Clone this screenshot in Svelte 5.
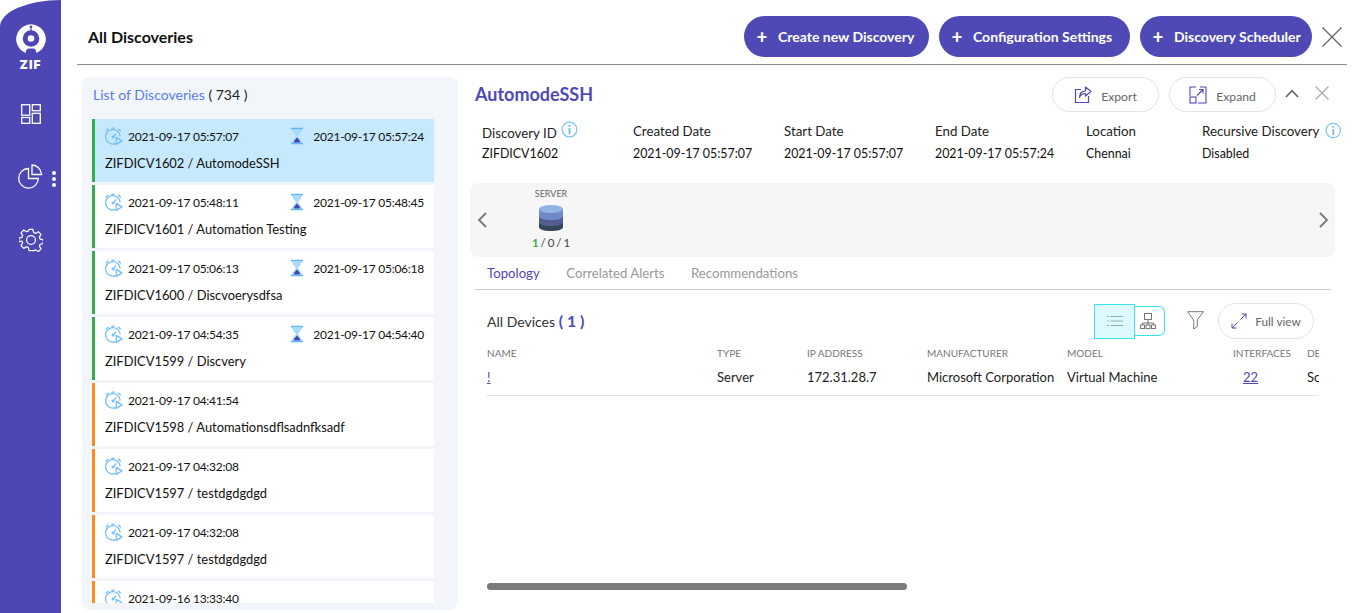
<script>
  const items = [
    { d: '2021-09-17 05:57:07', e: '2021-09-17 05:57:24', t: 'ZIFDICV1602 / AutomodeSSH', c: 'g', active: true },
    { d: '2021-09-17 05:48:11', e: '2021-09-17 05:48:45', t: 'ZIFDICV1601 / Automation Testing', c: 'g' },
    { d: '2021-09-17 05:06:13', e: '2021-09-17 05:06:18', t: 'ZIFDICV1600 / Discvoerysdfsa', c: 'g' },
    { d: '2021-09-17 04:54:35', e: '2021-09-17 04:54:40', t: 'ZIFDICV1599 / Discvery', c: 'g' },
    { d: '2021-09-17 04:41:54', t: 'ZIFDICV1598 / Automationsdflsadnfksadf', c: 'o' },
    { d: '2021-09-17 04:32:08', t: 'ZIFDICV1597 / testdgdgdgd', c: 'o' },
    { d: '2021-09-17 04:32:08', t: 'ZIFDICV1597 / testdgdgdgd', c: 'o' },
    { d: '2021-09-16 13:33:40', c: 'o' }
  ];
  const fields = [
    { l: 'Discovery ID', v: 'ZIFDICV1602', info: true, w: 151, low: true },
    { l: 'Created Date', v: '2021-09-17 05:57:07', w: 151 },
    { l: 'Start Date', v: '2021-09-17 05:57:07', w: 151 },
    { l: 'End Date', v: '2021-09-17 05:57:24', w: 151 },
    { l: 'Location', v: 'Chennai', w: 116 },
    { l: 'Recursive Discovery', v: 'Disabled', info: true, w: 140 }
  ];
</script>

{#snippet info()}
  <svg class="info" viewBox="0 0 18 18" width="17" height="17" aria-hidden="true">
    <circle cx="9" cy="9" r="7.8" fill="none" stroke="#7cc4f8" stroke-width="1.3" />
    <circle cx="9" cy="5.2" r="1.1" fill="#6dbcf6" />
    <rect x="8" y="7.5" width="2" height="6.5" fill="#6dbcf6" />
  </svg>
{/snippet}

{#snippet clock()}
  <svg viewBox="0 0 18 18" width="18" height="18" class="clock" aria-hidden="true">
    <g fill="none" stroke="#72bef7" stroke-width="1.25">
      <path d="M10.4 16.7A7.3 7.3 0 1 1 15.2 9.4" />
      <path d="M.8 4.4 3.4 1.8M13.2 1.8l2.6 2.600M6.400 1h3.200" />
      <path d="M8.400 9.800 11.200 6.400" />
      <circle cx="8" cy="10" r=".9" />
      <path d="M11.200 10.400v7l5.800-3.500z" stroke-linejoin="round" />
    </g>
  </svg>
{/snippet}

{#snippet hourglass()}
  <svg viewBox="0 0 14 18" width="14" height="18" aria-hidden="true">
    <path d="M1 .8h12v1.600H1zM1 15.600h12v1.600H1z" fill="#62b6f4" />
    <path d="M2.200 2.400h9.600c0 3-2.800 4.600-3.800 6.600 1 2 3.800 3.600 3.800 6.600H2.200c0-3 2.800-4.600 3.800-6.600-1-2-3.800-3.600-3.800-6.600z" fill="#a9d9fb" />
    <path d="M7 10.500c1 1.500 3 2.500 3.400 5.100H3.600C4 13 6 12 7 10.500z" fill="#3f48a8" />
  </svg>
{/snippet}

<div class="app">
  <aside class="rail">
    <div class="logo">
      <svg viewBox="0 0 30 30" width="30" height="30" aria-hidden="true">
        <path d="M9.500 28.900A14.800 14.800 0 1 1 20.500 28.900C20 25.500 18.500 24.500 17.500 24.500H12.500C11.500 24.500 10 25.500 9.500 28.900Z" fill="#fff" />
        <circle cx="15" cy="14.500" r="8.300" fill="#4d47b5" />
        <circle cx="15" cy="14.500" r="3.300" fill="#fff" />
        <rect x="14.400" y="2.500" width="1.200" height="5" fill="#4d47b5" />
        <circle cx="15" cy="2.700" r="1.300" fill="#4d47b5" />
      </svg>
      <span>ZIF</span>
    </div>
    <svg class="nav-ic n1" viewBox="0 0 20 20" width="20" height="20" aria-hidden="true">
      <g fill="none" stroke="#fff" stroke-width="1.300">
        <rect x=".7" y=".7" width="8" height="10.500" /><rect x="11.300" y=".7" width="8" height="6" />
        <rect x=".7" y="13.500" width="8" height="5.800" /><rect x="11.300" y="9.300" width="8" height="10" />
      </g>
    </svg>
    <div class="pie-row">
      <svg class="nav-ic" viewBox="0 0 25 25" width="25" height="25" aria-hidden="true">
        <g fill="none" stroke="#fff" stroke-width="1.300">
          <path d="M10.500 4.500A9.800 9.800 0 1 0 20.300 14.500H10.500z" />
          <path d="M14 1c5 .2 9 4 9.600 9.500H14z" />
        </g>
      </svg>
      <span class="dots"><i></i><i></i><i></i></span>
    </div>
    <svg class="nav-ic n3" viewBox="0 0 24 24" width="24" height="24" aria-hidden="true">
      <g fill="none" stroke="#fff" stroke-width="1.250" stroke-linejoin="round">
        <circle cx="12" cy="12" r="4.400" />
        <path d="M10 1h4l.7 3.200 2 .9 2.900-1.800 2.800 2.900-1.700 2.800.8 2 3.200.7v4l-3.200.7-.8 2 1.700 2.800-2.800 2.900-2.900-1.800-2 .9L14 23h-4l-.7-3.200-2-.9-2.900 1.800-2.800-2.900 1.700-2.800-.8-2L-.7 14v-4l3.200-.7.800-2L1.600 4.500 4.400 1.600l2.900 1.800 2-.9z" transform="translate(.5 .5) scale(.96)" />
      </g>
    </svg>
  </aside>

  <main class="main">
    <header class="top">
      <h1>All Discoveries</h1>
      <div class="top-actions">
        <button class="pill w1"><b>+</b>Create new Discovery</button>
        <button class="pill w2"><b>+</b>Configuration Settings</button>
        <button class="pill w3"><b>+</b>Discovery Scheduler</button>
        <svg viewBox="0 0 20 20" width="20" height="20" aria-hidden="true">
          <path d="M.5.5l19 19M19.500.5l-19 19" stroke="#666" stroke-width="1.300" fill="none" />
        </svg>
      </div>
    </header>

    <div class="body">
      <section class="list-panel">
        <div class="list-title"><span>List of Discoveries</span> ( 734 )</div>
        <div class="list">
          {#each items as it}
            <article class="item {it.c}" class:active={it.active}>
              <div class="times">
                <div class="time">{@render clock()}<span>{it.d}</span></div>
                {#if it.e}<div class="time end">{@render hourglass()}<span>{it.e}</span></div>{/if}
              </div>
              {#if it.t}<div class="name">{it.t}</div>{/if}
            </article>
          {/each}
        </div>
      </section>

      <section class="detail">
        <div class="d-head">
          <h2>AutomodeSSH</h2>
          <div class="d-actions">
            <button class="ghost">
              <svg viewBox="0 0 18 18" width="18" height="18" aria-hidden="true">
                <path d="M7 3.500H1.500v13h13V10" fill="none" stroke="#4d47b5" stroke-width="1.200" />
                <path d="M11.500 1l5.500 4.500-5.500 4.500V7.500c-3 0-5 1-6 4 0-4 2-6.500 6-6.500z" fill="none" stroke="#4d47b5" stroke-width="1.200" stroke-linejoin="round" />
              </svg><span>Export</span>
            </button>
            <button class="ghost">
              <svg viewBox="0 0 18 18" width="18" height="18" aria-hidden="true">
                <path d="M7 1H1v9M11 1h6v16H9" fill="none" stroke="#4d47b5" stroke-width="1.100" />
                <rect x="1" y="11" width="6" height="6" fill="none" stroke="#4d47b5" stroke-width="1.100" />
                <path d="M8 9.500 14 3.500M10 3.500h4v4" fill="none" stroke="#4d47b5" stroke-width="1.100" />
              </svg><span>Expand</span>
            </button>
            <svg class="chev" viewBox="0 0 14 9" width="14" height="9" aria-hidden="true"><path d="M1 8l6-6.300L13 8" fill="none" stroke="#666" stroke-width="1.700" /></svg>
            <svg class="x" viewBox="0 0 14 14" width="14" height="14" aria-hidden="true"><path d="M.5.5l13 13M13.500.5l-13 13" fill="none" stroke="#aaa" stroke-width="1.300" /></svg>
          </div>
        </div>

        <div class="fields">
          {#each fields as f}
            <div class="field" style="width:{f.w}px">
              <div class="label" class:low={f.low}>{f.l}{#if f.info}{@render info()}{/if}</div>
              <div class="val">{f.v}</div>
            </div>
          {/each}
        </div>

        <div class="strip">
          <svg viewBox="0 0 10 16" width="10" height="16" aria-hidden="true"><path d="M9 1 2 8l7 7" fill="none" stroke="#777" stroke-width="1.800" /></svg>
          <div class="srv">
            <div class="srv-l">SERVER</div>
            <svg viewBox="0 0 24 26" width="24" height="26" aria-hidden="true">
              <path d="M0 16v6c0 2.500 5 4 12 4s12-1.500 12-4v-6z" fill="#36465a" />
              <path d="M0 10v7c0 2.500 5 4 12 4s12-1.500 12-4v-7z" fill="#525f8e" />
              <path d="M0 4v7c0 2.500 5 4 12 4s12-1.500 12-4V4z" fill="#7089c8" />
              <ellipse cx="12" cy="4" rx="12" ry="4" fill="#8fb4e4" />
            </svg>
            <div class="srv-c"><em>1</em> / 0 / 1</div>
          </div>
          <svg class="next" viewBox="0 0 10 16" width="10" height="16" aria-hidden="true"><path d="M1 1l7 7-7 7" fill="none" stroke="#777" stroke-width="1.800" /></svg>
        </div>

        <nav class="tabs">
          <a class="on" href="#t">Topology</a><a href="#c">Correlated Alerts</a><a href="#r">Recommendations</a>
        </nav>

        <div class="dev-head">
          <div class="dev-title">All Devices <span>( 1 )</span></div>
          <div class="dev-tools">
            <div class="view">
              <div class="v-list">
                <svg viewBox="0 0 16 12" width="16" height="12" aria-hidden="true">
                  <path d="M3.500 1.500H16M3.500 6H16M3.500 10.500H16M0 1.500h2M0 6h2M0 10.500h2" stroke="#9aa" stroke-width="1" fill="none" />
                </svg>
              </div>
              <div class="v-tree">
                <svg viewBox="0 0 16 16" width="16" height="16" aria-hidden="true">
                  <g fill="none" stroke="#777" stroke-width="1">
                    <rect x="4.500" y=".5" width="7" height="6" /><path d="M8 6.500V10M2.500 12V10h11v2M8 10v2" />
                    <rect x=".5" y="12" width="4" height="3.500" /><rect x="6" y="12" width="4" height="3.500" /><rect x="11.500" y="12" width="4" height="3.500" />
                  </g>
                </svg>
              </div>
            </div>
            <svg class="funnel" viewBox="0 0 17 19" width="17" height="19" aria-hidden="true">
              <path d="M.7.700h15.600L10.300 9v6.500L6.700 18V9z" fill="none" stroke="#777" stroke-width="1" stroke-linejoin="round" />
            </svg>
            <button class="ghost full">
              <svg viewBox="0 0 16 16" width="16" height="16" aria-hidden="true">
                <path d="M1 15 6.500 9.500M1 10.500V15h4.500M15 1 9.500 6.500M10.500 1H15v4.500" fill="none" stroke="#4d47b5" stroke-width="1" />
              </svg><span>Full view</span>
            </button>
          </div>
        </div>

        <div class="table">
          <div class="tr th">
            <span>NAME</span><span>TYPE</span><span>IP ADDRESS</span><span>MANUFACTURER</span><span>MODEL</span><span>INTERFACES</span><span>DE</span>
          </div>
          <div class="tr td">
            <span><a href="#n">!</a></span><span>Server</span><span>172.31.28.7</span><span>Microsoft Corporation</span><span>Virtual Machine</span><span class="ifc"><a href="#i">22</a></span><span>Sc</span>
          </div>
        </div>
        <div class="scroll"><div class="thumb"></div></div>
      </section>
    </div>
  </main>
</div>

<style>
  :global(body) { margin: 0; background: #fff; }
  .app {
    display: flex; width: 1366px; height: 613px; overflow: hidden;
    font-family: Lato, "Liberation Sans", sans-serif; color: #111; font-size: 13px;
  }
  .rail {
    width: 61px; flex: none; height: 613px; background: #4d47b5;
    border-top-left-radius: 82px 36px;
    display: flex; flex-direction: column; align-items: center; box-sizing: border-box; padding-top: 24px;
  }
  .logo { display: flex; flex-direction: column; align-items: center; height: 48px; }
  .logo svg { display: block; }
  .logo span { color: #fff; font-weight: 900; font-size: 12px; letter-spacing: 1px; line-height: 12px; margin-top: 5px; font-family: Inter, sans-serif; }
  .nav-ic { display: block; }
  .n1 { margin-top: 32px; }
  .pie-row { position: relative; margin-top: 40px; height: 25px; }
  .dots { position: absolute; left: 34px; top: 7px; display: flex; flex-direction: column; gap: 2px; }
  .dots i { width: 4px; height: 4px; border-radius: 50%; background: #fff; }
  .n3 { margin-top: 39px; }

  .main {
    flex: 1; min-width: 0; background: #fff; border-top-left-radius: 24px 28px;
    padding: 16px 19px 0 16px; box-sizing: border-box; height: 613px;
  }
  .top {
    display: flex; justify-content: space-between; align-items: center; height: 41px;
    padding: 0 5px 7px 11px; border-bottom: 1px solid #8a8a8a; margin-bottom: 12px;
  }
  h1 { margin: 0; font-size: 16px; font-weight: 700; color: #111; }
  .top-actions { display: flex; align-items: center; gap: 10px; }
  .pill {
    height: 41px; border: 0; border-radius: 21px; background: #4f49b6; color: #fff;
    font: 700 14px Lato, sans-serif; display: flex; align-items: center; padding: 0 0 0 12px; box-sizing: border-box; white-space: nowrap;
  }
  .pill b { font-size: 18px; font-weight: 900; width: 12px; margin-right: 10px; text-align: center; }
  .w1 { width: 185px; } .w2 { width: 191px; } .w3 { width: 172px; }

  .body { display: flex; padding-left: 5px; }
  .list-panel {
    width: 376px; height: 533px; flex: none; background: #f2f6fa; border-radius: 8px; box-sizing: border-box;
    padding: 9px 24px 7px 10px; display: flex; flex-direction: column;
  }
  .list-title { height: 33px; font-size: 14px; line-height: 18px; padding-left: 1px; color: #222; }
  .list-title span { color: #5b7cf0; }
  .list { flex: 1; min-height: 0; overflow: hidden; display: flex; flex-direction: column; gap: 3px; }
  .item {
    flex: none; height: 63px; background: #fff; border-left: 3px solid #36ac4f; box-sizing: border-box;
    padding: 8px 10px 0 10px;
  }
  .item.o { border-left-color: #ff8c1a; }
  .item.active { background: #c7e9fd; }
  .times { display: flex; justify-content: space-between; height: 18px; }
  .time { display: flex; align-items: center; }
  .time span { font-size: 12px; letter-spacing: -0.25px; white-space: nowrap; }
  .clock { margin-right: 5px; }
  .end svg { margin-right: 9px; }
  .name { font-size: 12.9px; margin-top: 9px; line-height: 18px; white-space: nowrap; }

  .detail { flex: 1; min-width: 0; padding-left: 12px; }
  .d-head { display: flex; justify-content: space-between; height: 35px; padding-left: 5px; }
  h2 { margin: 0; font-size: 18px; line-height: 34px; color: #4f49b6; font-weight: 700; }
  .d-actions { display: flex; align-items: center; width: 295px; }
  .ghost {
    border: 1px solid #e2e2e2; background: #fff; border-radius: 18px; height: 35px; width: 107px; color: #666;
    font: 12.2px Lato, sans-serif; display: flex; align-items: center; justify-content: center; gap: 9px; box-sizing: border-box; padding: 0;
  }
  .ghost span { margin-top: 3px; }
  .ghost + .ghost { margin-left: 10px; }
  .chev { margin-left: 9px; margin-top: -3px; }
  .x { margin-left: 16px; margin-top: -3px; }

  .fields { display: flex; padding-left: 12px; margin-top: 8px; height: 46px; }
  .field { flex: none; }
  .label {
    font-size: 13.3px; line-height: 18px; height: 25px; padding-top: 2px; box-sizing: border-box;
    display: flex; align-items: flex-start; gap: 6px; color: #222; white-space: nowrap;
  }
  .label.low { padding-top: 4px; gap: 4px; }
  .low .info { margin-top: -3px; }
  .val { font-size: 12.4px; line-height: 18px; white-space: nowrap; }
  .strip {
    margin-top: 17px; height: 74px; width: 865px; background: #f6f6f6; border-radius: 8px; display: flex; box-sizing: border-box; padding: 0 6px 0 7px; align-items: center;
  }
  .srv { margin: 5px 0 0 45px; align-self: flex-start; display: flex; flex-direction: column; align-items: center; width: 38px; }
  .srv-l { font-size: 9px; color: #666; line-height: 12px; margin-bottom: 5px; }
  .srv-c { font-size: 11.5px; line-height: 14px; color: #444; margin-top: 5px; white-space: nowrap; word-spacing: -1px; }
  .srv-c em { font-style: normal; color: #36ac4f; font-weight: 700; }
  .next { margin-left: auto; }
  .tabs { margin: 6px 4px 0 5px; width: 856px; height: 27px; border-bottom: 1px solid #cfcfcf; display: flex; gap: 26.5px; padding-left: 12px; box-sizing: border-box; }
  .tabs a { color: #999; text-decoration: none; font-size: 13.2px; line-height: 20px; }
  .tabs a.on { color: #4f49b6; }
  .dev-head { display: flex; justify-content: space-between; align-items: center; margin: 0 0 0 17px; width: 827px; padding-top: 13px; height: 36px; }
  .dev-title { font-size: 14px; color: #333; margin-bottom: 2px; }
  .dev-title span { color: #4f49b6; font-size: 16px; font-weight: 700; }
  .dev-tools { display: flex; align-items: center; }
  .view { display: flex; align-items: center; }
  .v-list { width: 41px; height: 35px; border: 1px solid #38e4f2; background: #dcfaff; box-sizing: border-box; display: flex; align-items: center; justify-content: center; }
  .v-tree { width: 30px; height: 30px; border: 1px solid #38e4f2; border-left: 0; border-radius: 0 6px 6px 0; box-sizing: border-box; display: flex; align-items: center; justify-content: center; padding-right: 4px; }
  .funnel { margin-left: 22px; margin-top: -2px; }
  .ghost.full { margin-left: 14px; width: 96px; height: 36px; gap: 8px; font-size: 11.8px; }
  .ghost.full span { margin-top: 0; }
  .table { margin-left: 17px; width: 832px; overflow: hidden; margin-top: 4px; }
  .tr { display: grid; grid-template-columns: 230px 90px 120px 140px 166px 74px 12px; white-space: nowrap; }
  .th { font-size: 10px; color: #777; height: 22px; line-height: 20px; }
  .td { font-size: 13px; height: 30px; line-height: 24px; border-bottom: 1px solid #e3e3e3; color: #222; }
  .td a { color: #4f49b6; }
  .ifc { padding-left: 10px; }
  .scroll { margin: 187px 0 0 17px; width: 832px; height: 7px; }
  .thumb { width: 420px; height: 7px; border-radius: 4px; background: #7a7a7a; }
</style>
